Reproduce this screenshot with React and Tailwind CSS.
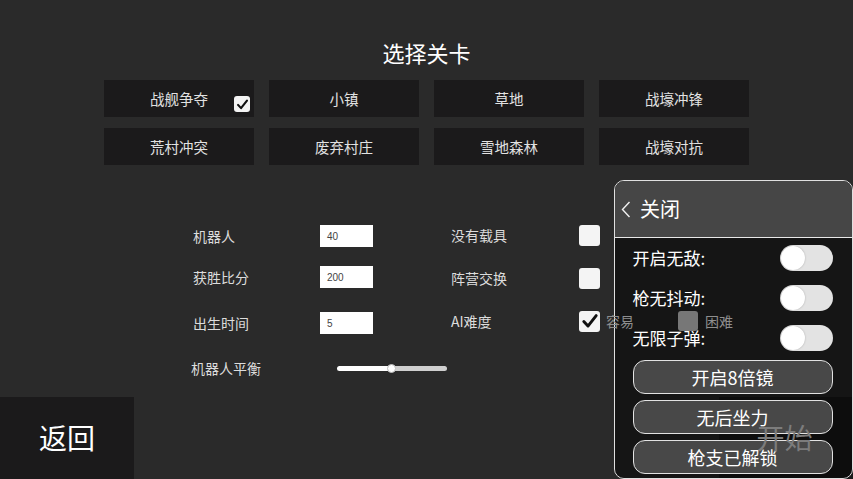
import React from "react";

const maps = [
  ["战舰争夺", true],
  ["小镇", false],
  ["草地", false],
  ["战壕冲锋", false],
  ["荒村冲突", false],
  ["废弃村庄", false],
  ["雪地森林", false],
  ["战壕对抗", false],
];

function Check({ size = 15 }) {
  return (
    <div
      className="flex items-center justify-center rounded-[3px] bg-[#f4f4f4]"
      style={{ width: size, height: size }}
    >
      <svg viewBox="0 0 16 16" width={size - 3} height={size - 3}>
        <path d="M2.5 8.5 L6.2 12.5 L13.5 3.2" fill="none" stroke="#111" strokeWidth="2.6" strokeLinecap="round" strokeLinejoin="round" />
      </svg>
    </div>
  );
}

function NumBox({ value }) {
  return (
    <div className="flex h-[22px] w-[53px] items-center bg-white pl-[7px] font-['Liberation_Sans',sans-serif] text-[10px] text-[#444]">
      {value}
    </div>
  );
}

function Toggle() {
  return (
    <div className="flex h-[26px] w-[53px] items-center rounded-full bg-[#e3e3e3] pl-[1px]">
      <div className="h-[24px] w-[24px] rounded-full bg-white shadow-[0_0_2px_rgba(0,0,0,0.25)]" />
    </div>
  );
}

function PanelButton({ children }) {
  return (
    <div className="flex h-[34px] items-center justify-center rounded-[12px] border-[1.5px] border-[#e2e2e2] bg-[#484848] text-[18px] text-white">
      {children}
    </div>
  );
}

export default function App() {
  return (
    <div className="relative flex h-[479px] w-[853px] flex-col overflow-hidden bg-[#2a2a2a] font-['Noto_Sans_CJK_SC','Noto_Sans',sans-serif]">
      {/* title */}
      <div className="mt-[37px] h-[30px] text-center text-[22px] leading-[30px] text-white">选择关卡</div>

      {/* map grid */}
      <div className="mt-[13px] flex justify-center">
        <div className="grid grid-cols-[repeat(4,150px)] gap-x-[15px] gap-y-[11px]">
          {maps.map(([name, checked]) => (
            <div
              key={name}
              className="relative flex h-[37px] items-center justify-center bg-[#1b1a1b] text-[14.5px] text-[#e2e2e2]"
            >
              {name}
              {checked && (
                <div className="absolute left-[130px] top-[16px]">
                  <Check size={16} />
                </div>
              )}
            </div>
          ))}
        </div>
      </div>

      {/* settings */}
      <div className="ml-[193px] mt-[59px] flex text-[14px] text-[#dcdcdc]">
        <div className="flex w-[258px] flex-col pt-[1px]">
          <div className="flex h-[22px] items-center">
            <span className="w-[127px]">机器人</span>
            <NumBox value="40" />
          </div>
          <div className="mt-[19px] flex h-[22px] items-center">
            <span className="w-[127px]">获胜比分</span>
            <NumBox value="200" />
          </div>
          <div className="mt-[24px] flex h-[22px] items-center">
            <span className="w-[127px]">出生时间</span>
            <NumBox value="5" />
          </div>
          <div className="-ml-[2px] mt-[23px] flex h-[22px] items-center">
            <span className="w-[146px]">机器人平衡</span>
            <div className="relative flex h-[5px] w-[110px] overflow-visible rounded-full">
              <div className="h-full w-[54px] rounded-l-full bg-white" />
              <div className="h-full flex-1 rounded-r-full bg-[#cfcfcf]" />
              <div className="absolute left-[50px] top-[-2px] h-[9px] w-[9px] rounded-full border border-[#bdbdbd] bg-white" />
            </div>
          </div>
        </div>

        <div className="flex flex-col">
          <div className="flex h-[22px] items-center">
            <span className="w-[128px]">没有载具</span>
            <div className="h-[21px] w-[21px] rounded-[3px] bg-[#f4f4f4]" />
          </div>
          <div className="mt-[21px] flex h-[22px] items-center">
            <span className="w-[128px]">阵营交换</span>
            <div className="h-[21px] w-[21px] rounded-[3px] bg-[#f4f4f4]" />
          </div>
          <div className="mt-[21px] flex h-[22px] items-center">
            <span className="w-[128px]">AI难度</span>
            <Check size={21} />
            <span className="relative z-20 ml-[6px] w-[72px] text-[#8e8e8e]">容易</span>
            <div className="relative z-20 h-[20px] w-[20px] rounded-[3px] bg-[#777777]" />
            <span className="relative z-20 ml-[7px] text-[#8e8e8e]">困难</span>
          </div>
        </div>
      </div>

      {/* bottom bar */}
      <div className="mt-auto flex h-[82px] justify-between">
        <div className="flex w-[134px] items-center justify-center bg-[#1b1a1b] pb-[2px] text-[28px] text-white">返回</div>
        <div className="flex w-[134px] items-center justify-center bg-[#1b1a1b] pb-[2px] pr-[3px] text-[28px]">
          <span className="relative z-20 text-[#7c7c7c]">开始</span>
        </div>
      </div>

      {/* cheat menu popup */}
      <div className="absolute left-[614px] top-[180px] z-10 flex h-[299px] w-[239px] flex-col overflow-hidden rounded-[10px] border-[1.5px] border-[#e0e0e0]">
        <div className="flex h-[57px] items-center border-b-[1.5px] border-[#e8e8e8] bg-[#464646] pl-[6px] text-[20px] text-white">
          <svg width="10" height="17" viewBox="0 0 10 17" className="mr-[9px]">
            <path d="M8.5 1 L1.5 8.5 L8.5 16" fill="none" stroke="#f0f0f0" strokeWidth="1.4" />
          </svg>
          关闭
        </div>
        <div className="flex flex-1 flex-col bg-black/50 pl-[17.5px] pr-[19.5px] pt-[7px] text-[17px] text-white">
          <div className="flex h-[26px] items-center justify-between">
            <span>开启无敌:</span>
            <Toggle />
          </div>
          <div className="mt-[14px] flex h-[26px] items-center justify-between">
            <span>枪无抖动:</span>
            <Toggle />
          </div>
          <div className="mt-[14px] flex h-[26px] items-center justify-between">
            <span>无限子弹:</span>
            <Toggle />
          </div>
          <div className="mt-[9px] flex flex-col gap-[6px]">
            <PanelButton>开启8倍镜</PanelButton>
            <PanelButton>无后坐力</PanelButton>
            <PanelButton>枪支已解锁</PanelButton>
          </div>
        </div>
      </div>
    </div>
  );
}
